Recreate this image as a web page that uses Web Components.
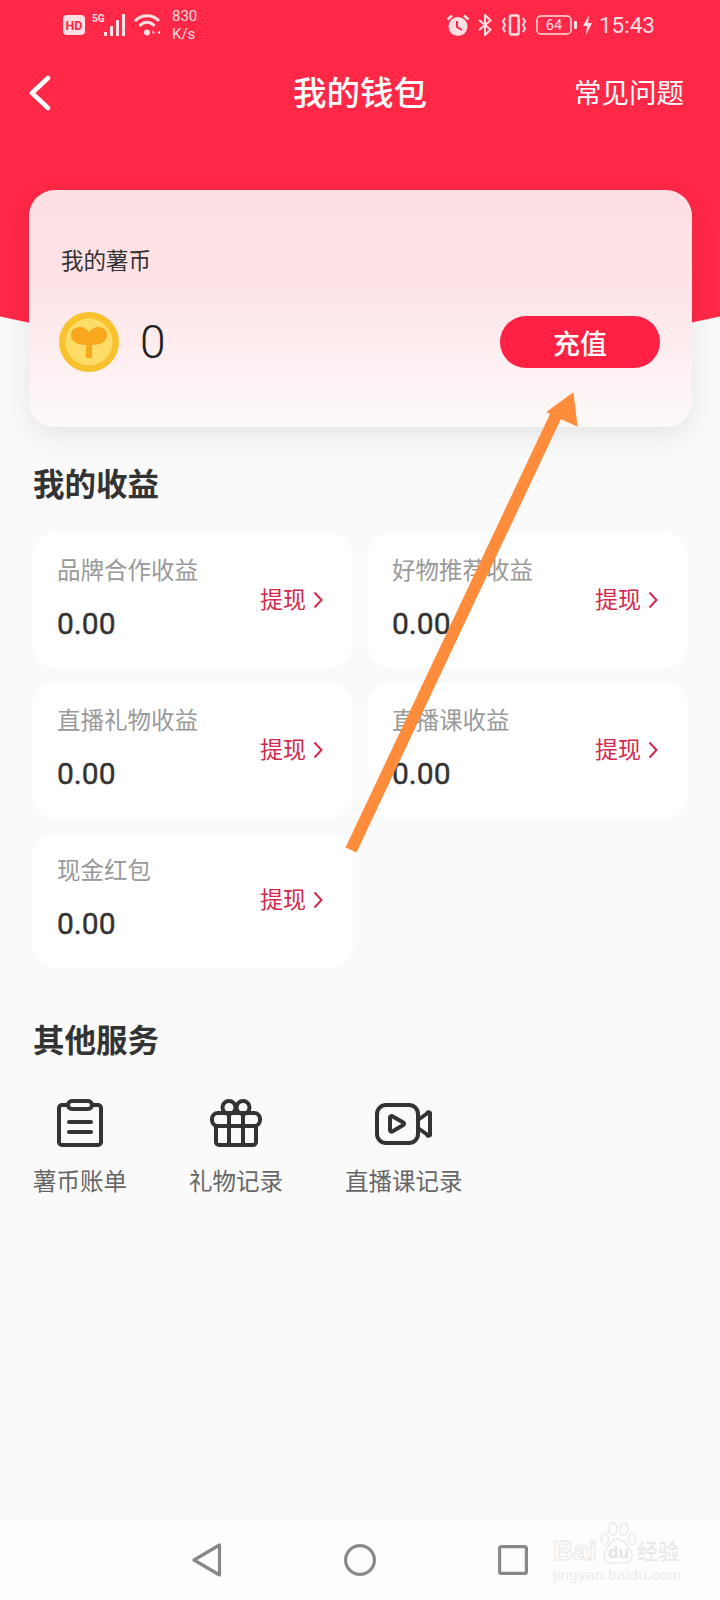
<!DOCTYPE html>
<html lang="zh">
<head>
<meta charset="utf-8">
<title>我的钱包</title>
<style>
  html, body { margin: 0; padding: 0; }
  body {
    position: relative;
    width: 720px;
    height: 1600px;
    overflow: hidden;
    background: #fafafa;
    font-family: "Noto Sans CJK SC", "Liberation Sans", sans-serif;
    color: #333;
  }
  wallet-page { height: 100%; }
  .pointer { position: absolute; left: 0; top: 0; pointer-events: none; }
</style>
</head>
<body>
<wallet-page>
  <wallet-hero slot="top">
    <status-bar></status-bar>
    <title-bar heading="我的钱包" action="常见问题"></title-bar>
    <coin-card label="我的薯币" amount="0" cta="充值"></coin-card>
  </wallet-hero>

  <section-title style="margin-top:35px">我的收益</section-title>
  <income-grid>
    <income-card label="品牌合作收益" amount="0.00"></income-card>
    <income-card label="好物推荐收益" amount="0.00"></income-card>
    <income-card label="直播礼物收益" amount="0.00"></income-card>
    <income-card label="直播课收益" amount="0.00"></income-card>
    <income-card label="现金红包" amount="0.00"></income-card>
  </income-grid>

  <section-title style="margin-top:50px">其他服务</section-title>
  <service-row>
    <service-item label="薯币账单" icon="bill"></service-item>
    <service-item label="礼物记录" icon="gift"></service-item>
    <service-item label="直播课记录" icon="video"></service-item>
  </service-row>

  <system-nav></system-nav>
</wallet-page>

<!-- orange annotation drawn on top of the screenshot -->
<svg class="pointer" width="720" height="1600" viewBox="0 0 720 1600">
  <path d="M351 850 L559 409" stroke="#ff8c3a" stroke-width="12" fill="none"/>
  <path d="M573 393 L577 426 L547 412 Z" fill="#ff8c3a" stroke="#ff8c3a" stroke-linejoin="round"/>
</svg>

<script>
const ICONS = {
  bill: `<svg width="46" height="48" viewBox="0 0 46 48" fill="none" stroke="#333" stroke-width="4" stroke-linecap="round" stroke-linejoin="round">
    <path d="M11 6H5a3 3 0 0 0-3 3v34a3 3 0 0 0 3 3h36a3 3 0 0 0 3-3V9a3 3 0 0 0-3-3h-6"/>
    <rect x="11" y="2" width="24" height="8" rx="4"/>
    <path d="M12 23H34M12 33H34"/>
  </svg>`,
  gift: `<svg width="52" height="48" viewBox="0 0 52 48" fill="none" stroke="#333" stroke-width="4" stroke-linecap="round" stroke-linejoin="round">
    <circle cx="19" cy="8.5" r="6.5"/>
    <circle cx="33" cy="8.5" r="6.5"/>
    <rect x="2" y="14" width="48" height="13" rx="6"/>
    <path d="M6 27V43a3 3 0 0 0 3 3H43a3 3 0 0 0 3-3V27"/>
    <path d="M19 14V46M33 14V46"/>
  </svg>`,
  video: `<svg width="57" height="48" viewBox="0 0 57 48" fill="none" stroke="#333" stroke-width="4" stroke-linecap="round" stroke-linejoin="round">
    <rect x="2" y="6" width="41" height="38" rx="9"/>
    <path d="M15 18.5a1.5 1.5 0 0 1 2.3-1.3l11 6.3a1.5 1.5 0 0 1 0 2.6l-11 6.3a1.5 1.5 0 0 1-2.3-1.3Z"/>
    <path d="M43 21L52 14.500a1.500 1.500 0 0 1 3 1V34.500a1.500 1.500 0 0 1-3 1L43 29"/>
  </svg>`
};

class WalletPage extends HTMLElement {
  constructor() {
    super();
    this.attachShadow({ mode: 'open' });
    this.shadowRoot.innerHTML = `
      <style>
        :host { display: flex; flex-direction: column; }
        ::slotted(system-nav) { margin-top: auto; }
      </style>
      <slot name="top"></slot>
      <slot></slot>
    `;
  }
}

class WalletHero extends HTMLElement {
  constructor() {
    super();
    this.attachShadow({ mode: 'open' });
    this.shadowRoot.innerHTML = `
      <style>
        :host {
          display: block;
          background: radial-gradient(ellipse 800px 355px at 50% 0, #ff2846 99.7%, transparent 100%);
        }
      </style>
      <slot></slot>
    `;
  }
}

class StatusBar extends HTMLElement {
  constructor() {
    super();
    this.attachShadow({ mode: 'open' });
    this.shadowRoot.innerHTML = `
      <style>
        :host {
          display: flex;
          align-items: center;
          justify-content: space-between;
          height: 50px;
          padding: 0 65px 0 63px;
          color: #ffdfe3;
          font-family: Roboto, "Liberation Sans", sans-serif;
        }
        .side { display: flex; align-items: center; }
        .speed { font-size: 15px; line-height: 18px; margin-left: 11px; }
        .time { font-size: 22.5px; margin-left: 7px; }
        svg { display: block; }
      </style>
      <div class="side">
        <svg width="22" height="20" viewBox="0 0 22 20">
          <rect width="22" height="20" rx="4" fill="#ffdfe3"/>
          <text x="11" y="15" font-size="12.5" font-weight="700" text-anchor="middle" fill="#ff2846" font-family="Roboto, sans-serif">HD</text>
        </svg>
        <svg width="35" height="22" viewBox="0 0 35 22" style="margin-left:7px" fill="#ffdfe3">
          <text x="0" y="8" font-size="10" font-weight="700" font-family="Roboto, sans-serif">5G</text>
          <rect x="12" y="18" width="3" height="4"/>
          <rect x="18" y="12" width="3" height="10"/>
          <rect x="24" y="6" width="3" height="16"/>
          <rect x="30" y="0" width="3" height="22"/>
        </svg>
        <svg width="27" height="22" viewBox="0 0 27 22" fill="none" stroke="#ffdfe3" stroke-width="3" style="margin-left:7px">
          <path d="M1 7C7 0 19 0 25 7"/>
          <path d="M5.500 12C10 7 16 7 20.500 12"/>
          <circle cx="13" cy="18.500" r="3" fill="#ffdfe3" stroke="none"/>
          <path d="M21 18.500L18.500 16.500V20.500ZM23.500 18.500L26 16.500V20.500Z" fill="#ffdfe3" stroke="none"/>
        </svg>
        <div class="speed">830<br>K/s</div>
      </div>
      <div class="side">
        <svg width="24" height="22" viewBox="0 0 24 22" fill="none" stroke="#ffdfe3" stroke-width="2.500">
          <circle cx="12" cy="12.500" r="9.500" fill="#ffdfe3" stroke="none"/>
          <path d="M11 7V13L16 16" stroke="#ff2846" stroke-width="2"/>
          <path d="M1.500 5.500L6 1.500M22.500 5.500L18 1.500"/>
        </svg>
        <svg width="14" height="22" viewBox="0 0 14 22" fill="none" stroke="#ffdfe3" stroke-width="2" style="margin-left:8px">
          <path d="M1 6L12.500 15.500L7 21V1L12.500 6.500L1 16"/>
        </svg>
        <svg width="26" height="22" viewBox="0 0 26 22" fill="none" stroke="#ffdfe3" stroke-width="2" style="margin-left:9px">
          <rect x="9" y="1.500" width="8.500" height="19" rx="1.500" stroke-width="2.500"/>
          <path d="M4 4L2 7.500L4 11L2 14.500L4 18M22 4L24 7.500L22 11L24 14.500L22 18"/>
        </svg>
        <svg width="41" height="20" viewBox="0 0 41 20" style="margin-left:9px">
          <rect x="1" y="1" width="34" height="18" rx="4" fill="none" stroke="#ffdfe3" stroke-width="1.500"/>
          <rect x="38" y="6" width="3" height="8" rx="1" fill="#ffdfe3"/>
          <text x="18" y="15" font-size="14.500" text-anchor="middle" fill="#ffdfe3" font-family="Roboto, sans-serif">64</text>
        </svg>
        <svg width="9" height="20" viewBox="0 0 9 20" style="margin-left:6px">
          <path d="M6 0L0 11H4L3 20L9 8H5Z" fill="#ffdfe3"/>
        </svg>
        <div class="time">15:43</div>
      </div>
    `;
  }
}

class TitleBar extends HTMLElement {
  constructor() {
    super();
    this.attachShadow({ mode: 'open' });
    this.shadowRoot.innerHTML = `
      <style>
        :host {
          display: grid;
          grid-template-columns: 1fr auto 1fr;
          align-items: center;
          height: 90px;
          padding: 0 36px;
          color: #fff;
        }
        h1 { margin: 0 0 8px; font-size: 33.500px; font-weight: 500; line-height: 60px; }
        .action { justify-self: end; margin-bottom: 8px; font-size: 27.500px; line-height: 40px; }
        svg { display: block; margin: 0 0 4px -8px; }
      </style>
      <svg width="24" height="36" viewBox="0 0 24 36" fill="none" stroke="#fff" stroke-width="4.500" stroke-linecap="round" stroke-linejoin="round">
        <path d="M20 3L4 18L20 33"/>
      </svg>
      <h1>${this.getAttribute('heading')}</h1>
      <div class="action">${this.getAttribute('action')}</div>
    `;
  }
}

class CoinCard extends HTMLElement {
  constructor() {
    super();
    this.attachShadow({ mode: 'open' });
    this.shadowRoot.innerHTML = `
      <style>
        :host {
          display: block;
          margin: 50px 28px 0 29px;
          height: 237px;
          box-sizing: border-box;
          padding: 53px 32px 0;
          border-radius: 26px;
          background: linear-gradient(#fde0e4 0%, #fde2e6 38%, #fdeef0 68%, #fef9f9 100%);
          box-shadow: 0 8px 28px rgba(0, 0, 0, .09);
          color: #333;
        }
        .label { font-size: 22.500px; line-height: 32px; }
        .row { display: flex; align-items: center; margin-top: 37px; height: 60px; }
        .amount {
          margin-left: 21px;
          font: 300 46px/60px Roboto, "Liberation Sans", sans-serif;
          color: #222;
        }
        button {
          margin-left: auto;
          width: 160px;
          height: 52px;
          border: 0;
          border-radius: 26px;
          background: #ff2144;
          color: #fff;
          font: 500 27px "Noto Sans CJK SC", sans-serif;
          padding: 0;
        }
        svg { display: block; margin-left: -2px; }
      </style>
      <div class="label">${this.getAttribute('label')}</div>
      <div class="row">
        <svg width="60" height="60" viewBox="0 0 60 60">
          <circle cx="30" cy="30" r="30" fill="#fac12e"/>
          <circle cx="30" cy="30" r="23.500" fill="#fedc68"/>
          <path d="M27 33C17 33 12 29 12 23C12 17 17 15 21 15C25 15 28 17 30 20C32 17 35 15 39 15C43 15 48 17 48 23C48 29 43 33 33 33V46H27Z" fill="#f9a81e"/>
        </svg>
        <div class="amount">${this.getAttribute('amount')}</div>
        <button>${this.getAttribute('cta')}</button>
      </div>
    `;
  }
}

class SectionTitle extends HTMLElement {
  constructor() {
    super();
    this.attachShadow({ mode: 'open' });
    this.shadowRoot.innerHTML = `
      <style>
        :host {
          display: block;
          padding-left: 33px;
          font-size: 31.500px;
          font-weight: 700;
          line-height: 40px;
          color: #333;
        }
      </style>
      <slot></slot>
    `;
  }
}

class IncomeGrid extends HTMLElement {
  constructor() {
    super();
    this.attachShadow({ mode: 'open' });
    this.shadowRoot.innerHTML = `
      <style>
        :host {
          display: grid;
          grid-template-columns: 321px 321px;
          grid-auto-rows: 135px;
          gap: 15px 14px;
          margin-top: 31px;
          padding-left: 32px;
        }
      </style>
      <slot></slot>
    `;
  }
}

class IncomeCard extends HTMLElement {
  constructor() {
    super();
    this.attachShadow({ mode: 'open' });
    this.shadowRoot.innerHTML = `
      <style>
        :host {
          display: flex;
          align-items: flex-start;
          justify-content: space-between;
          box-sizing: border-box;
          padding: 19px 30px 0 25px;
          background: #fff;
          border-radius: 24px;
        }
        .label { font-size: 23.500px; line-height: 34px; color: #999; }
        .amount {
          margin-top: 18px;
          font: 400 30px/40px Roboto, "Liberation Sans", sans-serif;
          -webkit-text-stroke: .4px #333;
          color: #333;
        }
        .cash {
          display: flex;
          align-items: center;
          gap: 7px;
          margin-top: 29px;
          font-size: 23px;
          line-height: 34px;
          color: #d4294f;
        }
        svg { display: block; margin-top: 3px; }
      </style>
      <div>
        <div class="label">${this.getAttribute('label')}</div>
        <div class="amount">${this.getAttribute('amount')}</div>
      </div>
      <div class="cash">提现
        <svg width="10" height="18" viewBox="0 0 10 18" fill="none" stroke="#d4294f" stroke-width="2">
          <path d="M1.500 1.500L8.500 9L1.500 16.500"/>
        </svg>
      </div>
    `;
  }
}

class ServiceRow extends HTMLElement {
  constructor() {
    super();
    this.attachShadow({ mode: 'open' });
    this.shadowRoot.innerHTML = `
      <style>
        :host {
          display: flex;
          gap: 62px;
          margin-top: 41px;
          padding-left: 33px;
        }
      </style>
      <slot></slot>
    `;
  }
}

class ServiceItem extends HTMLElement {
  constructor() {
    super();
    this.attachShadow({ mode: 'open' });
    this.shadowRoot.innerHTML = `
      <style>
        :host {
          display: flex;
          flex-direction: column;
          align-items: center;
          gap: 16px;
        }
        .label { font-size: 23.500px; line-height: 34px; color: #666; white-space: nowrap; }
        svg { display: block; }
      </style>
      ${ICONS[this.getAttribute('icon')]}
      <div class="label">${this.getAttribute('label')}</div>
    `;
  }
}

class SystemNav extends HTMLElement {
  constructor() {
    super();
    this.attachShadow({ mode: 'open' });
    this.shadowRoot.innerHTML = `
      <style>
        :host {
          display: block;
          position: relative;
          height: 80px;
          background: #fdfdfd;
        }
        .keys {
          display: flex;
          align-items: center;
          box-sizing: border-box;
          height: 80px;
          padding-left: 192px;
        }
        svg { display: block; }
        .mark {
          position: absolute;
          left: 553px;
          top: 2px;
          width: 130px;
          color: #ececec;
          font-family: "Liberation Sans", sans-serif;
        }
        .logo { display: flex; align-items: flex-end; height: 42px; }
        .bai {
          width: 47px;
          font-size: 28px;
          font-weight: 700;
          line-height: 27px;
          color: #fdfdfd;
          -webkit-text-stroke: 1px #e6e6e6;
        }
        .paw { position: relative; width: 36px; height: 42px; }
        .du {
          position: absolute;
          left: 8px;
          bottom: 1px;
          font-size: 17px;
          font-weight: 700;
          line-height: 20px;
          color: #e2e2e2;
        }
        .jy {
          margin-left: 1px;
          font: 500 21px/27px "Noto Sans CJK SC", sans-serif;
          color: #e8e8e8;
        }
        .url { margin-top: 2px; font-size: 15.500px; line-height: 18px; white-space: nowrap; letter-spacing: .2px; }
      </style>
      <div class="keys">
        <svg width="30" height="34" viewBox="0 0 30 34" fill="none" stroke="#888" stroke-width="3.200" stroke-linejoin="round">
          <path d="M27.500 2V32L2 17Z"/>
        </svg>
        <svg width="32" height="32" viewBox="0 0 32 32" fill="none" stroke="#888" stroke-width="3.200" style="margin-left:122px">
          <circle cx="16" cy="16" r="14.400"/>
        </svg>
        <svg width="30" height="30" viewBox="0 0 30 30" fill="none" stroke="#888" stroke-width="3.200" stroke-linejoin="round" style="margin-left:122px">
          <rect x="1.600" y="1.600" width="26.800" height="26.800" rx="2"/>
        </svg>
      </div>
      <div class="mark">
        <div class="logo">
          <div class="bai">Bai</div>
          <div class="paw">
            <svg width="36" height="42" viewBox="0 0 36 42" fill="#fdfdfd" stroke="#e6e6e6" stroke-width="1.200">
              <ellipse cx="5" cy="17" rx="3.500" ry="5.500"/>
              <ellipse cx="13" cy="7" rx="4" ry="6.500"/>
              <ellipse cx="24" cy="7" rx="4" ry="6.500"/>
              <ellipse cx="32" cy="17" rx="3.500" ry="5.500"/>
              <path d="M18 17C12 17 8 24 5 29C2 35 6 41 12 41H24C30 41 34 35 31 29C28 24 24 17 18 17Z"/>
            </svg>
            <div class="du">du</div>
          </div>
          <div class="jy">经验</div>
        </div>
        <div class="url">jingyan.baidu.com</div>
      </div>
    `;
  }
}

customElements.define('wallet-page', WalletPage);
customElements.define('wallet-hero', WalletHero);
customElements.define('status-bar', StatusBar);
customElements.define('title-bar', TitleBar);
customElements.define('coin-card', CoinCard);
customElements.define('section-title', SectionTitle);
customElements.define('income-grid', IncomeGrid);
customElements.define('income-card', IncomeCard);
customElements.define('service-row', ServiceRow);
customElements.define('service-item', ServiceItem);
customElements.define('system-nav', SystemNav);
</script>
</body>
</html>
